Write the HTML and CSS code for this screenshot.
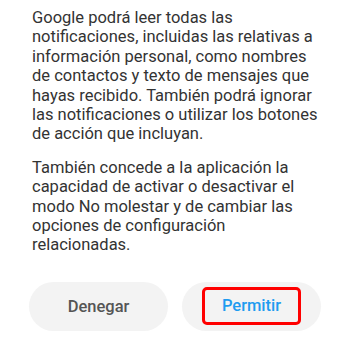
FILE: index.html
```html
<!DOCTYPE html>
<html lang="es">
<head>
    <meta charset="UTF-8">
    <meta name="viewport" content="width=device-width, initial-scale=1.0">
    <title>Acceso a notificaciones</title>
    <link rel="stylesheet" href="styles.css">
</head>
<body>
    <div class="dialogo">
        <div class="mensaje">
            <p>Google podrá leer todas las notificaciones, incluidas las relativas a información personal, como nombres de contactos y texto de mensajes que hayas recibido. También podrá ignorar las notificaciones o utilizar los botones de acción que incluyan.</p>
            <p>También concede a la aplicación la capacidad de activar o desactivar el modo No molestar y de cambiar las opciones de configuración relacionadas.</p>
        </div>

        <!-- Botones -->
        <div class="acciones">
            <button class="boton boton-denegar">Denegar</button>
            <button class="boton boton-permitir"><span class="marca">Permitir</span></button>
        </div>
    </div>
</body>
</html>
```

FILE: styles.css
```css
* {
    box-sizing: border-box;
    margin: 0;
    padding: 0;
}

body {
    background-color: #ffffff;
    font-family: Roboto, 'Noto Sans', Arial, sans-serif;
    color: #333333;
}

.dialogo {
    padding: 8px 29px 0 29px;
}

.mensaje {
    padding-left: 3px;
    font-size: 16.5px;
    line-height: 19.4px;
}

.mensaje p + p {
    margin-top: 14px;
}

.acciones {
    display: flex;
    gap: 14px;
    margin-top: 27px;
}

.boton {
    flex: 1;
    height: 49px;
    border: none;
    border-radius: 25px;
    background-color: #f3f3f3;
    font-family: inherit;
    font-size: 16.5px;
    font-weight: 500;
    display: flex;
    align-items: center;
    justify-content: center;
}

.boton-denegar {
    color: #555555;
}

.boton-permitir {
    color: #1e9cf0;
}

.marca {
    display: block;
    padding: 9px 17px;
    border: 3px solid #ff0000;
    border-radius: 5px;
    line-height: 14px;
}
```
